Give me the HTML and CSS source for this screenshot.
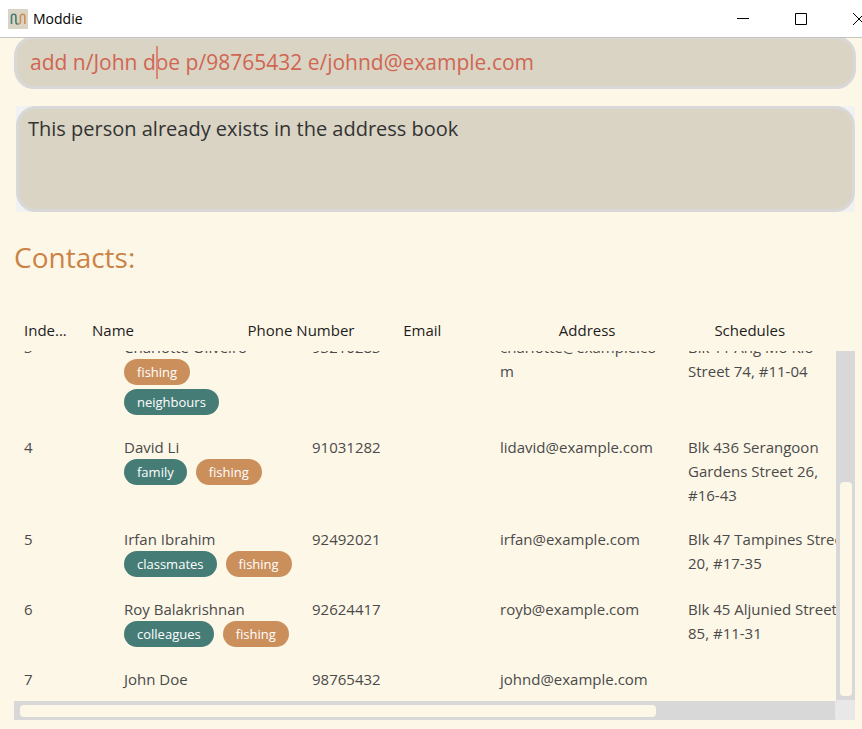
FILE: index.html
```html
<!DOCTYPE html>
<html lang="en">
<head>
<meta charset="utf-8">
<meta name="viewport" content="width=device-width, initial-scale=1">
<title>Moddie</title>
<link rel="stylesheet" href="styles.css">
</head>
<body>
<header class="titlebar">
  <svg class="logo" viewBox="0 0 20 20" aria-hidden="true">
    <rect width="20" height="20" fill="#dad4c4"/>
    <path d="M3.500 15V7.500a2.200 2.200 0 0 1 4.400 0V13a2 2 0 0 0 2.300 2" fill="none" stroke="#467c76" stroke-width="1.600"/>
    <path d="M10.200 15a2 2 0 0 0 2.200-2V7.500a2.200 2.200 0 0 1 4.400 0V15" fill="none" stroke="#cb8f5b" stroke-width="1.600"/>
  </svg>
  <h1 class="app-name">Moddie</h1>
  <div class="window-buttons">
    <button type="button" aria-label="Minimize"><svg viewBox="0 0 12 12"><path d="M0 5.500h12"/></svg></button>
    <button type="button" aria-label="Maximize"><svg viewBox="0 0 12 12"><path d="M.5.500h11v11H.5z"/></svg></button>
    <button type="button" aria-label="Close"><svg viewBox="0 0 12 12"><path d="M0 0l12 12M12 0L0 12"/></svg></button>
  </div>
</header>
<main class="app">
  <div class="command">
    <input class="command-input" type="text" aria-label="Command" value="add n/John doe p/98765432 e/johnd@example.com">
    <span class="caret"></span>
  </div>
  <div class="result">
    <textarea class="result-text" aria-label="Result" readonly>This person already exists in the address book</textarea>
  </div>
  <h2 class="heading">Contacts:</h2>
  <section class="list">
    <table class="contacts">
      <thead>
        <tr><th>Inde...</th><th>Name</th><th>Phone Number</th><th>Email</th><th>Address</th><th>Schedules</th></tr>
      </thead>
      <tbody>
        <tr>
          <td>3</td>
          <td>Charlotte Oliveiro<div class="tags"><span class="tag alt">fishing</span><span class="tag">neighbours</span></div></td>
          <td>93210283</td><td>charlotte@example.com</td><td>Blk 11 Ang Mo Kio Street 74, <span class="unit">#11-04</span></td><td></td>
        </tr>
        <tr>
          <td>4</td>
          <td>David Li<div class="tags"><span class="tag">family</span><span class="tag alt">fishing</span></div></td>
          <td>91031282</td><td>lidavid@example.com</td><td>Blk 436 Serangoon Gardens Street 26, <span class="unit">#16-43</span></td><td></td>
        </tr>
        <tr>
          <td>5</td>
          <td>Irfan Ibrahim<div class="tags"><span class="tag">classmates</span><span class="tag alt">fishing</span></div></td>
          <td>92492021</td><td>irfan@example.com</td><td>Blk 47 Tampines Street 20, <span class="unit">#17-35</span></td><td></td>
        </tr>
        <tr>
          <td>6</td>
          <td>Roy Balakrishnan<div class="tags"><span class="tag">colleagues</span><span class="tag alt">fishing</span></div></td>
          <td>92624417</td><td>royb@example.com</td><td>Blk 45 Aljunied Street 85, <span class="unit">#11-31</span></td><td></td>
        </tr>
        <tr>
          <td>7</td><td>John Doe</td><td>98765432</td><td>johnd@example.com</td><td></td><td></td>
        </tr>
      </tbody>
    </table>
    <div class="bar vertical"><div class="thumb"></div></div>
    <div class="bar horizontal"><div class="thumb"></div></div>
    <div class="corner"></div>
  </section>
</main>
</body>
</html>
```
FILE: styles.css
```css
* { box-sizing: border-box; }

body {
  margin: 0;
  height: 100vh;
  display: flex;
  flex-direction: column;
  overflow: hidden;
  background: #fdf7e7;
  font-family: "Open Sans", "Noto Sans", sans-serif;
}

.titlebar {
  flex: none;
  height: 38px;
  display: flex;
  align-items: center;
  gap: 5px;
  padding-left: 8px;
  background: #fff;
  border-bottom: 1px solid #c4c4c4;
  overflow: hidden;
}
.logo { width: 20px; height: 20px; }
.app-name { margin: 0; font-size: 14px; line-height: 20px; font-weight: 400; color: #000; }
.window-buttons { display: flex; margin-left: auto; margin-right: -26px; }
.window-buttons button {
  width: 58px;
  height: 36px;
  padding: 0;
  border: 0;
  background: none;
  display: grid;
  place-items: center;
}
.window-buttons svg { width: 12px; height: 12px; fill: none; stroke: #000; }

.app {
  flex: 1;
  min-height: 0;
  display: flex;
  flex-direction: column;
  padding: 0 7px 9px 14px;
  overflow: hidden;
}

.command { position: relative; margin: -2px -1px 0 0; }
.command-input {
  display: block;
  width: 100%;
  height: 53px;
  padding: 0 13px 2px;
  border: 3px solid #d8d8d8;
  border-radius: 20px;
  background: #dad4c4;
  color: #d06651;
  font: 400 21px/30px "Open Sans", sans-serif;
  outline: 0;
}
.caret {
  position: absolute;
  left: 142px;
  top: 10px;
  width: 2px;
  height: 33px;
  background: #d98673;
}

.result { margin: 17px 0 0 2px; background: #f2f2f2; }
.result-text {
  display: block;
  width: 100%;
  height: 106px;
  padding: 5px 9px;
  border: 3px solid #d8d8d8;
  border-radius: 20px;
  background: #dad4c4;
  color: #333;
  font: 400 20px/30px "Open Sans", sans-serif;
  resize: none;
  outline: 0;
}

.heading {
  margin: 24px 0 31px;
  font-size: 28px;
  line-height: 42px;
  font-weight: 400;
  color: #cb8345;
}

.list {
  flex: 1;
  min-height: 0;
  display: grid;
  grid-template: minmax(0, 1fr) 19px / minmax(0, 1fr) 19px;
}
.contacts {
  display: flex;
  flex-direction: column;
  min-height: 0;
  font-size: 15px;
  line-height: 24px;
}
.contacts thead { display: block; margin-right: -24px; color: #1d1d1d; }
.contacts thead tr {
  display: grid;
  grid-template-columns: 68px repeat(5, minmax(0, 1fr));
  height: 42px;
  align-items: center;
}
.contacts th { padding: 0 10px; font-weight: 400; text-align: left; white-space: nowrap; }
.contacts tbody {
  flex: 1;
  min-height: 0;
  display: flex;
  flex-direction: column;
  justify-content: flex-end;
  overflow: hidden;
  color: #4a4a4a;
}
.contacts tbody tr {
  flex: none;
  display: grid;
  grid-template-columns: 100px repeat(5, 188px);
}
.contacts td { padding: 10px; overflow-wrap: anywhere; }
.unit { white-space: nowrap; }

.tags { display: flex; flex-wrap: wrap; gap: 4px 9px; }
.tag {
  padding: 0 13px;
  border-radius: 13px;
  background: #467c76;
  color: #fff;
  font-size: 13px;
  line-height: 26px;
}
.tag.alt { background: #cb8f5b; }

.bar { background: #d8d8d8; }
.thumb { border-radius: 4px; background: #fdf7e7; }
.vertical {
  margin-top: 42px;
  display: flex;
  flex-direction: column;
  justify-content: flex-end;
  padding: 0 3px 5px 4px;
}
.vertical .thumb { height: 62%; }
.horizontal { padding: 4px 0 3px 6px; }
.horizontal .thumb { width: 78%; height: 100%; }
.corner { margin: -1px 0 0 -1px; border-radius: 3px 0 0 3px; background: #e8e8e8; }
```
